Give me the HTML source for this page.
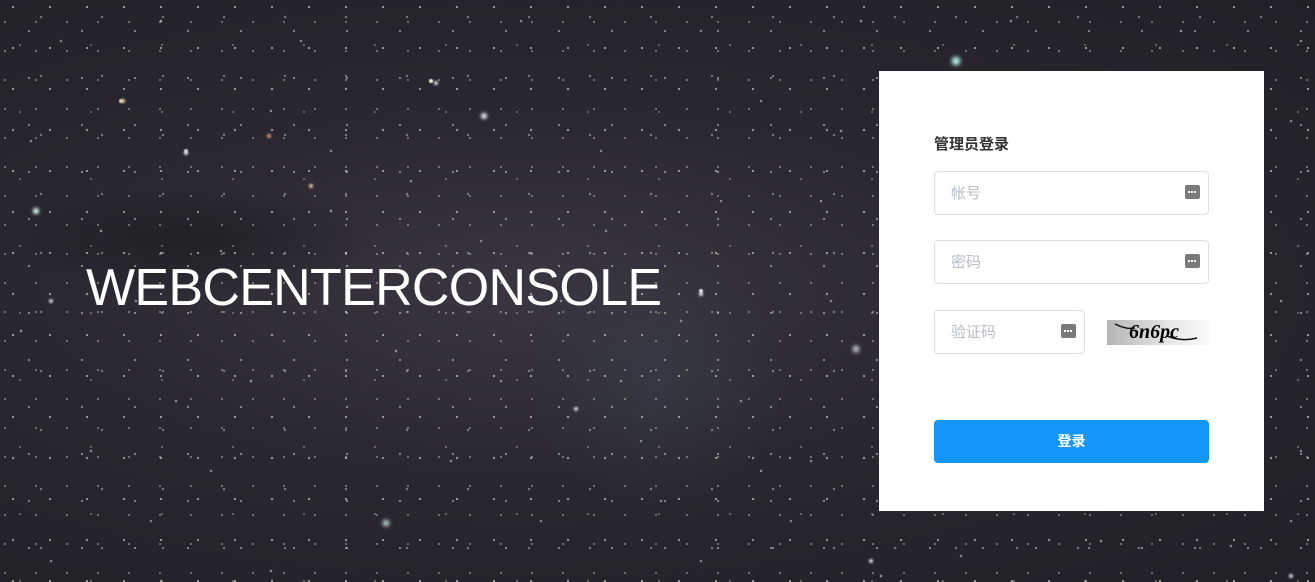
<!DOCTYPE html>
<html><head><meta charset="utf-8">
<style>
html,body{margin:0;padding:0;width:1315px;height:582px;overflow:hidden}
body{background:radial-gradient(ellipse at 40% 50%,#3a3540 0%,#2b2730 45%,#221f27 100%);position:relative;font-family:"Liberation Sans","Noto Sans CJK SC",sans-serif}
.noise{position:absolute;left:0;top:0;width:1315px;height:582px;
background-image:
radial-gradient(circle at 13px 7px,rgba(220,220,210,.7) 0.8px,transparent 1.3px),
radial-gradient(circle at 29px 31px,rgba(210,215,230,.6) 0.8px,transparent 1.3px),
radial-gradient(circle at 5px 22px,rgba(230,220,200,.55) 0.7px,transparent 1.2px),
radial-gradient(circle at 41px 17px,rgba(200,210,220,.5) 0.9px,transparent 1.4px),
radial-gradient(circle at 20px 45px,rgba(220,200,180,.5) 0.7px,transparent 1.2px);
background-size:37px 41px,53px 47px,31px 29px,61px 59px,71px 67px;}
.stars{position:absolute;left:0;top:0;width:2px;height:2px;border-radius:50%;background:transparent;
box-shadow:
35px 210px 3px 2px #dfe,483px 115px 3px 2px #eef,955px 60px 4px 3px #bfe,855px 348px 4px 2px #eef,385px 522px 4px 2px #dfe,
185px 150px 1px 1px #ccd,120px 100px 1px 1px #dcb,300px 40px 1px #ccd,430px 80px 1px 1px #eed,600px 150px 1px #ccd,700px 290px 1px 1px #ddd,
640px 440px 1px #ccd,540px 520px 1px #cce,250px 380px 1px #ddc,90px 450px 1px #ccd,20px 330px 1px #eed,150px 520px 1px #ccd,
760px 100px 1px #ccd,820px 200px 1px #dde,790px 520px 1px #ccd,1290px 120px 1px #ccd,1280px 300px 1px #ddd,1300px 450px 1px #ccd,
1230px 545px 1px #ccd,1100px 540px 1px #ddd,960px 555px 1px #ccd,700px 560px 1px #ccd,575px 408px 2px 1px #dde,680px 320px 1px #ccd,
480px 240px 1px #ccd,330px 210px 1px #ddd,220px 250px 1px #ccd,60px 40px 1px #ccd,160px 20px 1px #eed,520px 20px 1px #ccd,
700px 30px 1px #ccd,860px 20px 1px #ddd,50px 560px 1px #ccd,270px 570px 1px #ddd,450px 460px 1px #ccd,740px 400px 1px #ccd,
605px 230px 1px #ccd,395px 350px 1px #ddd,135px 300px 1px #ccd,810px 460px 1px #ccd,1010px 20px 1px #ccd,1180px 30px 1px #ddd,
1300px 40px 1px #ccd,1290px 520px 1px #ccd,880px 575px 1px #ddd,560px 300px 1px #ccd,620px 380px 1px #ccd,210px 470px 1px #ccd,
330px 150px 1px #ccd,270px 110px 1px #ddc,410px 180px 1px #ccd,720px 200px 1px #ccd,840px 130px 1px #ddd,30px 140px 1px #ccd,
100px 230px 1px #ddd,175px 400px 1px #ccd,500px 380px 1px #ccd,660px 500px 1px #ccd,760px 470px 1px #ddd,830px 300px 1px #ccd,
700px 293px 2px 1px #eee,310px 185px 2px 1px #ec9,268px 135px 2px 1px #d98,122px 100px 2px 1px #ed9,185px 152px 2px 1px #eef,
50px 300px 2px 1px #dde,435px 82px 2px 1px #dde,870px 560px 2px 1px #dde,1290px 575px 2px 1px #dde;}
.wm{position:absolute;left:86px;top:258px;color:#fff;font-size:52px;letter-spacing:-0.7px;line-height:60px}
.panel{position:absolute;left:879px;top:71px;width:385px;height:440px;background:#fff}
.title{position:absolute;left:55px;top:62px;font-size:15px;font-weight:bold;color:#333}
.inp{position:absolute;left:55px;width:273px;height:42px;border:1px solid #dcdfe6;border-radius:4px;box-sizing:content-box}
.inp span{position:absolute;left:16px;top:10px;font-size:15px;color:#b8bcc4}
.ic{position:absolute;right:8px;top:13px;width:15px;height:14px;background:#7a7a7a;border-radius:2px}
.ic:after{content:"";position:absolute;left:3px;top:6px;width:9px;height:2px;background:repeating-linear-gradient(90deg,#fff 0 2px,transparent 2px 3px)}
.cap{position:absolute;left:228px;top:249px;width:102px;height:25px;background:linear-gradient(90deg,#b4b4b4,#e6e6e6 60%,#fafafa);font-family:"Liberation Serif",serif;font-weight:bold;font-style:italic;font-size:20px;line-height:25px;color:#000;text-indent:22px;overflow:hidden}
.btn{position:absolute;left:55px;top:349px;width:275px;height:43px;background:#1296fa;border-radius:4px;color:#fff;font-size:14px;font-weight:bold;text-align:center;line-height:43px}
</style></head><body>
<div style="position:absolute;left:530px;top:260px;width:250px;height:240px;border-radius:50%;background:radial-gradient(circle,rgba(60,90,100,.25),rgba(40,60,70,.1) 70%,transparent)"></div>
<div style="position:absolute;left:0;top:180px;width:380px;height:120px;background:radial-gradient(ellipse,rgba(20,18,22,.5),transparent 70%)"></div>
<div class="noise"></div>
<div class="stars"></div>
<div class="wm">WEBCENTERCONSOLE</div>
<div class="panel">
<div class="title">管理员登录</div>
<div class="inp" style="top:100px"><span>帐号</span><i class="ic"></i></div>
<div class="inp" style="top:169px"><span>密码</span><i class="ic"></i></div>
<div class="inp" style="top:239px;width:149px"><span>验证码</span><i class="ic"></i></div>
<div class="cap">6n6pc<svg style="position:absolute;left:0;top:0" width="102" height="25"><path d="M8 4 Q20 10 28 8 M60 16 Q75 22 90 18" stroke="#111" stroke-width="1.5" fill="none"/></svg></div>
<div class="btn">登录</div>
</div>
</body></html>
